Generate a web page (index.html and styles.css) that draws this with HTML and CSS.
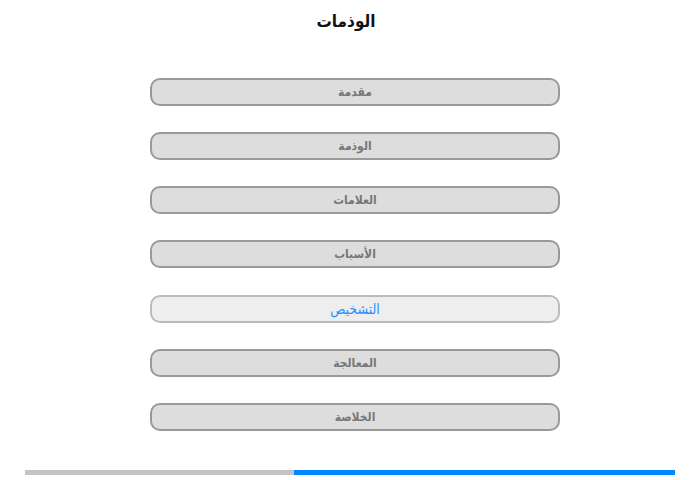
FILE: index.html
```html
<!DOCTYPE html>
<html lang="ar" dir="rtl">
<head>
<meta charset="utf-8">
<title>الوذمات</title>
<link rel="stylesheet" href="styles.css">
</head>
<body>
<div class="page">
  <h1 class="title">الوذمات</h1>
  <nav class="menu">
    <div class="item">مقدمة</div>
    <div class="item">الوذمة</div>
    <div class="item">العلامات</div>
    <div class="item">الأسباب</div>
    <div class="item active">التشخيص</div>
    <div class="item">المعالجة</div>
    <div class="item">الخلاصة</div>
  </nav>
  <div class="progress" dir="ltr">
    <div class="done" style="width:269px"></div>
    <div class="rest"></div>
  </div>
</div>
</body>
</html>
```
FILE: styles.css
```css
html, body {
  margin: 0;
  padding: 0;
  background: #fff;
}
body {
  font-family: "DejaVu Sans Condensed", "DejaVu Sans", "Liberation Sans", sans-serif;
  width: 700px;
  height: 480px;
  overflow: hidden;
}
.page {
  display: flex;
  flex-direction: column;
  align-items: stretch;
}
.title {
  margin: 0;
  padding: 10px 8px 0 0;
  height: 78px;
  box-sizing: border-box;
  text-align: center;
  font-size: 17px;
  font-weight: bold;
  color: #111;
  line-height: 22px;
}
.menu {
  display: flex;
  flex-direction: column;
  gap: 26px;
  width: 410px;
  margin-right: 140px;
  margin-left: 150px;
}
.item {
  height: 28px;
  box-sizing: border-box;
  border: 2px solid #999;
  border-radius: 10px;
  background: #ddd;
  color: #777;
  font-size: 12px;
  font-weight: bold;
  text-align: center;
  line-height: 24px;
}
.item.active {
  margin-top: 1px;
  background: #eee;
  border-color: #bbb;
  color: #1e90ff;
  font-size: 14px;
  font-weight: normal;
}
.progress {
  display: flex;
  margin: 39px 25px 0 25px;
  height: 5px;
}
.done {
  background: #c4c4c4;
}
.rest {
  flex: 1;
  background: #0088ff;
}
```
